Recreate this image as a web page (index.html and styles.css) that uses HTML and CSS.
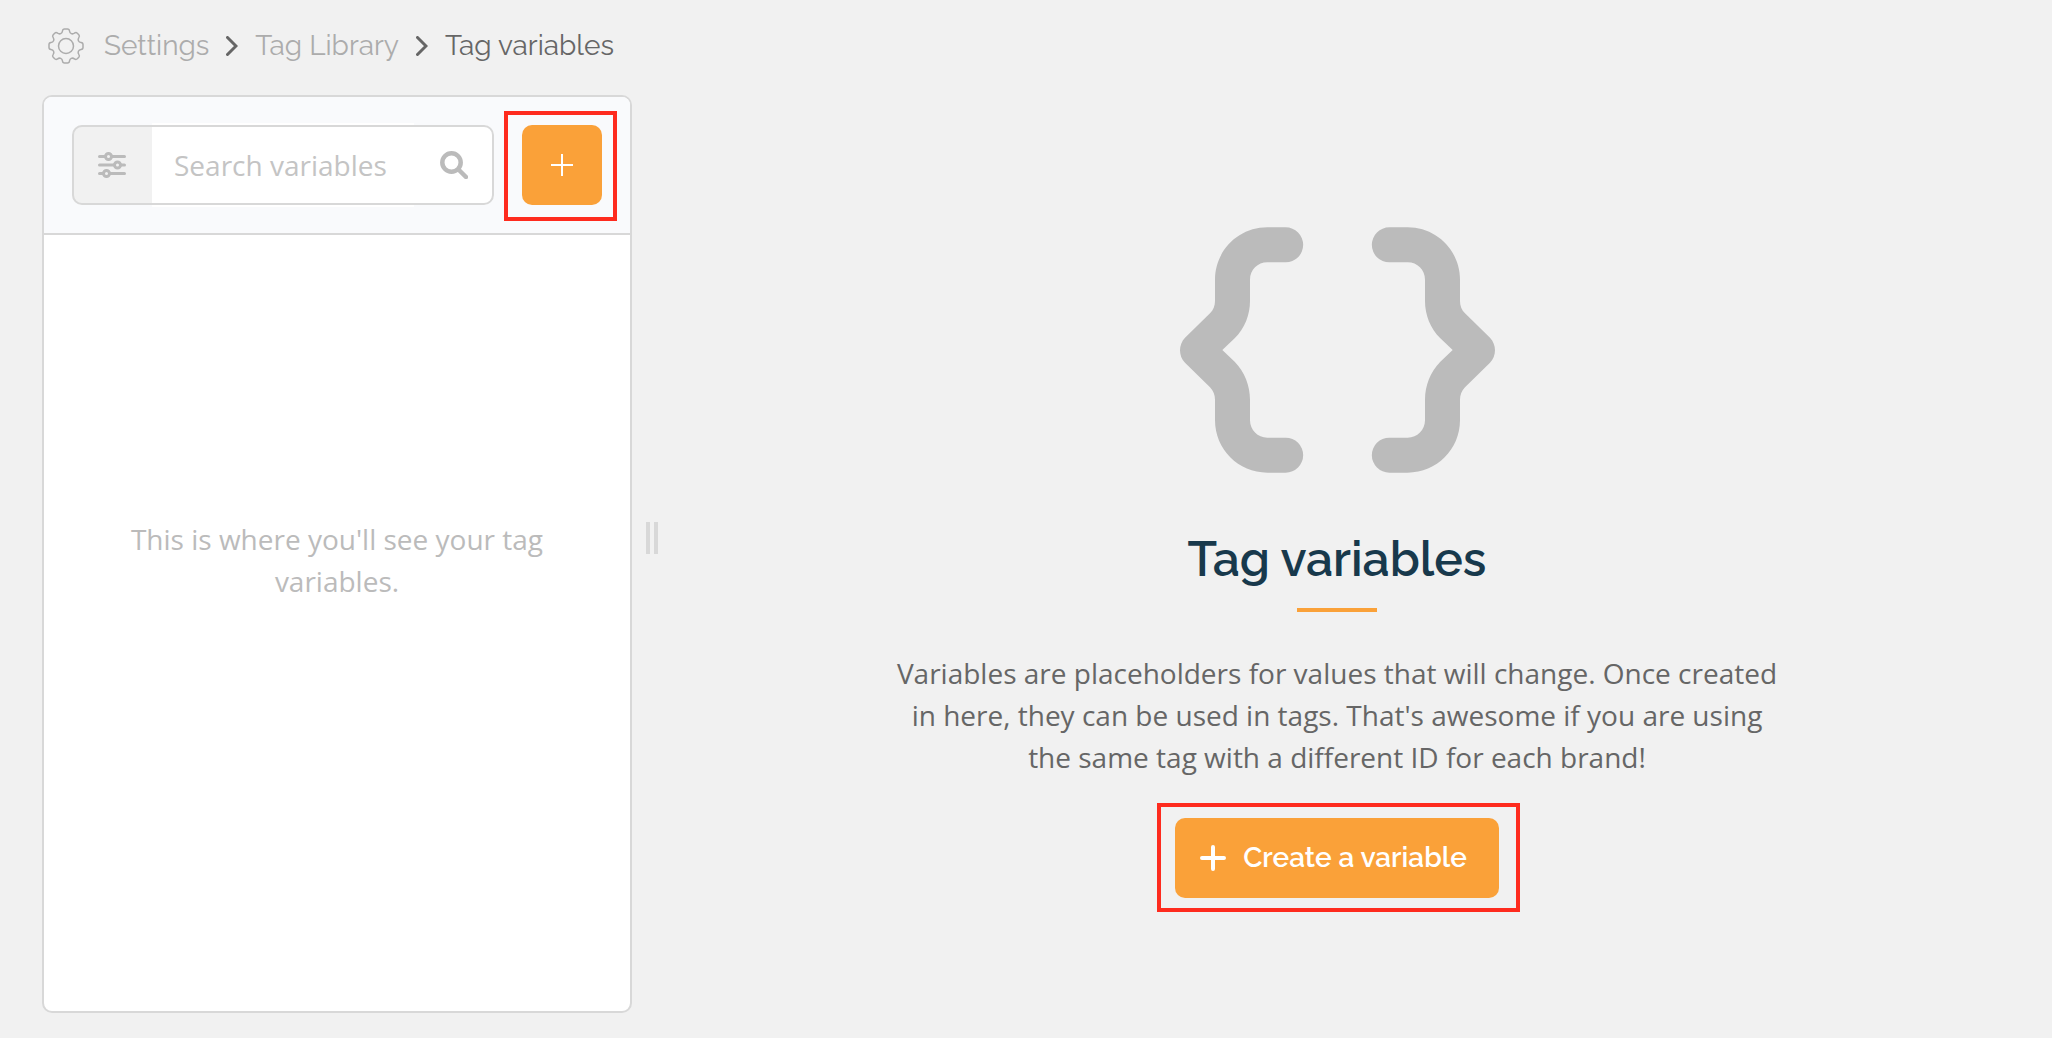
FILE: index.html
```html
<!DOCTYPE html>
<html lang="en">
<head>
    <meta charset="utf-8">
    <title>Tag variables</title>
    <link rel="stylesheet" href="styles.css">
</head>
<body>
    <nav class="breadcrumb" aria-label="Breadcrumb">
        <svg class="gear" viewBox="0 0 36 36" aria-hidden="true">
            <path d="M14.5 3 Q14.7 1 16.5 1 H19.5 Q21.3 1 21.5 3 C21.8 5.5 24.3 6.7 26.4 5.2 Q28 4 29.3 5.200 L30.800 6.700 Q32 8 30.800 9.600 C29.300 11.700 30.500 14.200 33 14.500 Q35 14.700 35 16.500 V19.500 Q35 21.300 33 21.500 C30.500 21.800 29.300 24.300 30.800 26.400 Q32 28 30.800 29.300 L29.300 30.800 Q28 32 26.400 30.800 C24.300 29.300 21.800 30.500 21.500 33 Q21.300 35 19.500 35 H16.500 Q14.700 35 14.500 33 C14.200 30.500 11.700 29.300 9.600 30.800 Q8 32 6.700 30.800 L5.200 29.300 Q4 28 5.200 26.400 C6.700 24.300 5.500 21.800 3 21.500 Q1 21.300 1 19.500 V16.500 Q1 14.700 3 14.500 C5.500 14.200 6.700 11.700 5.200 9.600 Q4 8 5.200 6.700 L6.700 5.200 Q8 4 9.600 5.200 C11.700 6.700 14.200 5.500 14.500 3 Z"/>
            <circle cx="18" cy="18" r="7.500"/>
        </svg>
        <a href="#">Settings</a>
        <svg class="chevron" viewBox="0 0 12 20" aria-hidden="true"><path d="M1.500 1.500 L10 10 L1.500 18.500"/></svg>
        <a href="#">Tag Library</a>
        <svg class="chevron" viewBox="0 0 12 20" aria-hidden="true"><path d="M1.500 1.500 L10 10 L1.500 18.500"/></svg>
        <span class="current">Tag variables</span>
    </nav>

    <div class="page">
        <aside class="panel">
            <div class="panel-header">
                <form class="search">
                    <button type="button" class="filter" aria-label="Filters">
                        <svg viewBox="0 0 28 26" aria-hidden="true">
                            <path d="M1.500 4.500 H26.500 M1.500 13 H26.500 M1.500 21.500 H26.500"/>
                            <circle cx="10.500" cy="4.500" r="3"/>
                            <circle cx="19.500" cy="13" r="3"/>
                            <circle cx="8.500" cy="21.500" r="3"/>
                        </svg>
                    </button>
                    <input type="text" placeholder="Search variables" aria-label="Search variables">
                    <button type="submit" class="find" aria-label="Search">
                        <svg viewBox="0 0 28 28" aria-hidden="true">
                            <circle cx="11.500" cy="11.500" r="9.200"/>
                            <path d="M19 19 L26 26"/>
                        </svg>
                    </button>
                </form>
                <div class="highlight">
                    <button type="button" class="btn btn-square" aria-label="Add variable">
                        <svg viewBox="0 0 22 22" aria-hidden="true"><path d="M11 0 V22 M0 11 H22"/></svg>
                    </button>
                </div>
            </div>
            <div class="panel-body">
                <p>This is where you'll see your tag variables.</p>
            </div>
        </aside>

        <div class="handle"></div>

        <main class="intro">
            <svg class="braces" viewBox="90 51 945 736" aria-hidden="true">
                <path id="brace" d="M352 51 H407 a52 52 0 0 1 0 105 H352 C323 156 300 179 300 208 V272 C300 314 284 354 254 384 L217 419 L254 454 C284 484 300 526 300 568 V630 C300 659 323 682 352 682 H407 a52 52 0 0 1 0 105 H352 C265 787 195 717 195 630 V568 C195 554 190 541 180 531 L105 457 C85 436 85 403 105 382 L180 309 C190 299 195 286 195 272 V208 C195 121 265 51 352 51 Z"/>
                <use href="#brace" transform="translate(1125 0) scale(-1 1)"/>
            </svg>
            <h1>Tag variables</h1>
            <hr>
            <p>Variables are placeholders for values that will change. Once created in here, they can be used in tags. That's awesome if you are using the same tag with a different ID for each brand!</p>
            <div class="highlight highlight-wide">
                <button type="button" class="btn btn-create">
                    <svg viewBox="0 0 26 26" aria-hidden="true"><path d="M13 2 V24 M2 13 H24"/></svg>
                    Create a variable
                </button>
            </div>
        </main>
    </div>
</body>
</html>
```
FILE: styles.css
```css
*,
*::before,
*::after {
    box-sizing: border-box;
}

body {
    display: flex;
    flex-direction: column;
    min-height: 100vh;
    margin: 0;
    padding: 0 42px 25px;
    background-color: #f1f1f1;
    color: #666;
    font-family: "Open Sans", sans-serif;
    font-size: 28px;
    line-height: 42px;
}

svg {
    display: block;
    fill: none;
    stroke: currentColor;
}

button {
    padding: 0;
    border: none;
    cursor: pointer;
}

/* breadcrumb */
.breadcrumb {
    display: flex;
    align-items: center;
    gap: 17px;
    height: 95px;
    padding: 0 6px 4px;
    font-family: Raleway, Lato, sans-serif;
}

.breadcrumb a {
    color: #acacac;
    text-decoration: none;
}

.gear {
    width: 36px;
    height: 36px;
    margin-right: 3px;
    color: #acacac;
    stroke-width: 1.5;
}

.chevron {
    width: 12px;
    height: 20px;
    stroke-width: 3;
    stroke-linecap: round;
}

/* layout */
.page {
    display: flex;
    flex: 1;
}

.panel {
    display: flex;
    flex-direction: column;
    flex: 0 0 590px;
    overflow: hidden;
    background-color: #fff;
    border: 2px solid #d8d8d8;
    border-radius: 10px;
}

.panel-header {
    display: flex;
    gap: 28px;
    padding: 28px;
    background-color: #f9fafc;
    border-bottom: 2px solid #d8d8d8;
}

.search {
    position: relative;
    display: flex;
    flex: 1;
    align-items: center;
    min-width: 0;
    height: 80px;
    background-color: #fff;
    border-radius: 10px;
}

/* border sits over the input, which is a little taller than the box */
.search::after {
    content: "";
    position: absolute;
    inset: 0;
    border: 2px solid #d8d8d8;
    border-radius: 10px;
    pointer-events: none;
}

.filter {
    display: flex;
    align-items: center;
    justify-content: center;
    flex: 0 0 80px;
    height: 80px;
    background-color: #f1f1f1;
    border-radius: 10px 0 0 10px;
    color: #bbb;
}

.filter svg {
    width: 28px;
    height: 26px;
    stroke-width: 3;
    stroke-linecap: round;
}

.filter circle {
    fill: #f1f1f1;
}

.search input {
    flex: 1;
    min-width: 0;
    height: 84px;
    padding: 0 22px;
    background-color: #fff;
    border: none;
    outline: none;
    color: #666;
    font: inherit;
}

.search input::placeholder {
    color: #c4c4c4;
}

.find {
    display: flex;
    align-items: center;
    justify-content: center;
    flex: 0 0 80px;
    height: 76px;
    background: none;
    color: #bbb;
}

.find svg {
    width: 28px;
    height: 28px;
    stroke-width: 4.5;
    stroke-linecap: round;
}

.panel-body {
    display: flex;
    flex: 1;
    align-items: center;
    justify-content: center;
    padding: 0 72px 126px;
    color: #bbb;
    text-align: center;
}

.panel-body p {
    margin: 0;
}

.handle {
    display: flex;
    align-items: center;
    justify-content: center;
    flex: 0 0 32px;
    padding: 0 0 32px 8px;
    cursor: col-resize;
}

.handle::before {
    content: "";
    width: 12px;
    height: 32px;
    border: solid #d8d8d8;
    border-width: 0 4px;
}

/* buttons */
.btn {
    display: flex;
    align-items: center;
    justify-content: center;
    height: 80px;
    background-color: #faa139;
    border-radius: 10px;
    color: #fff;
    font-family: Raleway, Lato, sans-serif;
    font-size: 28px;
    font-weight: 600;
}

.btn-square {
    width: 80px;
}

.btn-square svg {
    width: 22px;
    height: 22px;
    stroke-width: 2;
}

.btn-create {
    gap: 17px;
    padding: 0 32px 0 25px;
}

.btn-create svg {
    width: 26px;
    height: 26px;
    stroke-width: 4;
    stroke-linecap: round;
}

.highlight {
    position: relative;
}

.highlight::after {
    content: "";
    position: absolute;
    inset: -14px -15px -16px -18px;
    border: 4px solid #fe2b1e;
    pointer-events: none;
}

.highlight-wide::after {
    inset: -15px -21px -14px -18px;
}

/* intro */
.intro {
    display: flex;
    flex: 1;
    flex-direction: column;
    align-items: center;
    justify-content: center;
    padding-top: 16px;
    text-align: center;
}

.braces {
    width: 315px;
    height: 246px;
    color: #bbb;
    fill: currentColor;
    stroke: none;
}

.intro h1 {
    margin: 56px 0 19px;
    color: #18394c;
    font-family: Raleway, Lato, sans-serif;
    font-size: 48px;
    font-weight: 600;
    line-height: 60px;
}

.intro hr {
    width: 80px;
    height: 4px;
    margin: 0 0 40px;
    background-color: #faa139;
    border: none;
}

.intro p {
    max-width: 900px;
    margin: 0 0 40px;
}
```
